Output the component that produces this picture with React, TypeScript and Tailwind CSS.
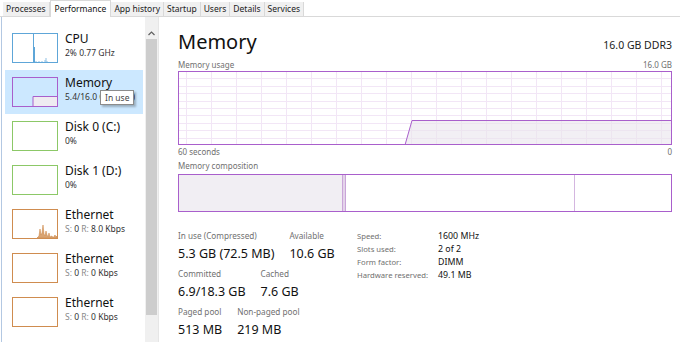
import React from 'react';

const font = { fontFamily: '"Noto Sans", "Open Sans", sans-serif' };

const tabs = ['Processes', 'Performance', 'App history', 'Startup', 'Users', 'Details', 'Services'];

type Kind = 'cpu' | 'mem' | 'disk' | 'eth' | 'flat';

const netSub = (r: string) => (
  <>
    <span className="text-[#8a8a8a]">S:</span> 0 <span className="text-[#8a8a8a]">R:</span> {r} Kbps
  </>
);

const items: { name: string; sub: React.ReactNode; kind: Kind; color: string }[] = [
  { name: 'CPU', sub: '2%  0.77 GHz', kind: 'cpu', color: '#5ea6d8' },
  { name: 'Memory', sub: '5.4/16.0 GB (34%)', kind: 'mem', color: '#a95fcc' },
  { name: 'Disk 0 (C:)', sub: '0%', kind: 'disk', color: '#8cc867' },
  { name: 'Disk 1 (D:)', sub: '0%', kind: 'disk', color: '#8cc867' },
  { name: 'Ethernet', sub: netSub('8.0'), kind: 'eth', color: '#cf8c4f' },
  { name: 'Ethernet', sub: netSub('0'), kind: 'flat', color: '#cf8c4f' },
  { name: 'Ethernet', sub: netSub('0'), kind: 'flat', color: '#cf8c4f' },
];

const specs: [string, string][] = [
  ['Speed:', '1600 MHz'],
  ['Slots used:', '2 of 2'],
  ['Form factor:', 'DIMM'],
  ['Hardware reserved:', '49.1 MB'],
];

function Thumb({ kind, color }: { kind: Kind; color: string }) {
  return (
    <svg width="46" height="30" className="block shrink-0">
      {kind === 'mem' && (
        <path d="M21 29.5 V19.5 H45.5 V29.5 Z" fill="#efebf1" stroke={color} strokeWidth="1" />
      )}
      {kind === 'cpu' && (
        <>
          <path d="M21.5 29 V1 M22.5 29 V14" stroke={color} strokeWidth="1" />
          <path d="M24 29 v-1 M27 29 v-1 M30 29 v-1 M33 29 v-2 M34 29 v-4 M35 29 v-1" stroke="#8fc0e4" strokeWidth="1" />
        </>
      )}
      {kind === 'eth' && (
        <path
          d="M25 29 L26 28 L27 27 L28 20 L29 26 L30 24 L31 16 L32 25 L33 27 L34 22 L35 26 L36 28 L37 24 L38 28 L40 27 L41 29 L43 26 L44 28 L45 27 V29 Z"
          fill="#d9a472"
          stroke={color}
          strokeWidth="0.6"
        />
      )}
      <rect x="0.5" y="0.5" width="45" height="29" fill="none" stroke={color} strokeWidth="1" />
    </svg>
  );
}

function UsageGraph() {
  const w = 494;
  const h = 74;
  const vs: number[] = [];
  for (let x = 8.5; x < w; x += 25) vs.push(x);
  const hs: number[] = [];
  for (let i = 1; i < 10; i++) hs.push(Math.round(i * 7.4) + 0.5);
  return (
    <svg width={w} height={h} className="block shrink-0">
      {vs.map((x) => (
        <line key={'v' + x} x1={x} y1={0} x2={x} y2={h} stroke="#f2e6f6" strokeWidth="1" />
      ))}
      {hs.map((y) => (
        <line key={'h' + y} x1={0} y1={y} x2={w} y2={y} stroke="#f2e6f6" strokeWidth="1" />
      ))}
      <path d={`M227 ${h} L234 49.5 L${w} 49.5 L${w} ${h} Z`} fill="#e9e4ec" fillOpacity="0.6" />
      <path d={`M227 ${h} L234 49.5 L${w} 49.5`} fill="none" stroke="#a95fcc" strokeWidth="1" />
      <rect x="0.5" y="0.5" width={w - 1} height={h - 1} fill="none" stroke="#a95fcc" strokeWidth="1" />
    </svg>
  );
}

function Stat({ label, value }: { label: string; value: string }) {
  return (
    <div className="flex flex-col whitespace-nowrap">
      <div className="text-[8.2px] leading-[12px] text-[#707070]">{label}</div>
      <div className="text-[12.5px] leading-[20px] text-[#111] mt-[2px]">{value}</div>
    </div>
  );
}

export default function App() {
  return (
    <div className="w-[680px] h-[342px] bg-white overflow-hidden flex flex-col" style={font}>
      {/* Tabs */}
      <div className="h-[17px] flex items-end border-b border-[#d9d9d9] pl-[3px] shrink-0">
        {tabs.map((t) =>
          t === 'Performance' ? (
            <div
              key={t}
              className="h-[17px] -mb-px px-[4px] bg-white border border-b-0 border-[#d9d9d9] text-[8.5px] leading-[16px] text-[#111] whitespace-nowrap"
            >
              {t}
            </div>
          ) : (
            <div
              key={t}
              className="h-[14px] px-[3px] bg-[#f0f0f0] border-r border-[#d9d9d9] text-[8.5px] leading-[14px] text-[#222] whitespace-nowrap"
            >
              {t}
            </div>
          )
        )}
      </div>

      <div className="flex flex-1 min-h-0">
        {/* left edge */}
        <div className="w-[3px] shrink-0 flex">
          <div className="w-[2px] border-r border-[#b3c8e2]" />
        </div>

        {/* sidebar */}
        <div className="w-[142px] shrink-0 pt-[9px] pl-[2px] relative">
          {items.map((it, i) => (
            <div
              key={i}
              className={
                'h-[44px] w-[138px] flex pt-[7px] pl-[7px] gap-[7px] ' + (it.kind === 'mem' ? 'bg-[#cce8ff]' : '')
              }
            >
              <Thumb kind={it.kind} color={it.color} />
              <div className="w-[70px] flex flex-col -mt-[2px] whitespace-nowrap overflow-hidden">
                <div className="text-[12px] leading-[16px] text-[#111]">{it.name}</div>
                <div className="text-[8.5px] leading-[12px] text-[#333]">{it.sub}</div>
              </div>
            </div>
          ))}
          {/* tooltip */}
          <div className="absolute left-[97px] top-[73px] h-[15px] px-[4px] bg-white border border-[#8c8c8c] shadow-[2px_2px_2px_rgba(0,0,0,0.25)] text-[8.5px] leading-[13px] text-[#444]">
            In use
          </div>
        </div>

        {/* scrollbar */}
        <div className="w-[13px] shrink-0 bg-[#f0f0f0] flex flex-col pt-[10px]">
          <div className="h-[12px] flex items-center justify-center">
            <svg width="7" height="5" viewBox="0 0 7 5">
              <path d="M0.5 4 L3.5 1 L6.5 4" fill="none" stroke="#606060" strokeWidth="1.2" />
            </svg>
          </div>
          <div className="mx-[1px] h-[276px] bg-[#cdcdcd]" />
        </div>
        <div className="w-px shrink-0 bg-[#e6e6e6]" />

        {/* main */}
        <div className="flex-1 pl-[19px] pr-[8px] flex flex-col">
          <div className="flex items-baseline justify-between pt-[11px] shrink-0">
            <div className="text-[20px] leading-[28px] text-[#111]">Memory</div>
            <div className="text-[10.5px] leading-[28px] text-[#222]">16.0 GB DDR3</div>
          </div>
          <div className="flex justify-between text-[8px] leading-[12px] text-[#707070] shrink-0">
            <span>Memory usage</span>
            <span>16.0 GB</span>
          </div>
          <UsageGraph />
          <div className="flex justify-between text-[8px] leading-[12px] text-[#707070] mt-[1px] shrink-0">
            <span>60 seconds</span>
            <span>0</span>
          </div>
          <div className="text-[8px] leading-[12px] text-[#707070] mt-[2px] shrink-0">Memory composition</div>
          <div className="h-[38px] border border-[#a95fcc] flex mt-[2px] shrink-0">
            <div className="w-[163px] bg-[#f1eef3]" />
            <div className="w-[4px] bg-[#e4d3ea] border-x border-[#c9a5d8]" />
            <div className="w-[229px] border-r border-[#d4b6e0]" />
            <div className="flex-1" />
          </div>

          {/* stats */}
          <div className="flex items-start mt-[18px] shrink-0">
            <div className="w-[179px] shrink-0 flex flex-col gap-[4px]">
              <div className="flex gap-[15px]">
                <Stat label="In use (Compressed)" value="5.3 GB (72.5 MB)" />
                <Stat label="Available" value="10.6 GB" />
              </div>
              <div className="flex gap-[15px]">
                <Stat label="Committed" value="6.9/18.3 GB" />
                <Stat label="Cached" value="7.6 GB" />
              </div>
              <div className="flex gap-[15px]">
                <Stat label="Paged pool" value="513 MB" />
                <Stat label="Non-paged pool" value="219 MB" />
              </div>
            </div>
            <div className="grid grid-cols-[81px_auto] content-start leading-[13px] whitespace-nowrap">
              {specs.map(([k, v]) => (
                <React.Fragment key={k}>
                  <span className="text-[7.7px] text-[#707070]">{k}</span>
                  <span className="text-[8.8px] text-[#111]">{v}</span>
                </React.Fragment>
              ))}
            </div>
          </div>
        </div>
      </div>
    </div>
  );
}
